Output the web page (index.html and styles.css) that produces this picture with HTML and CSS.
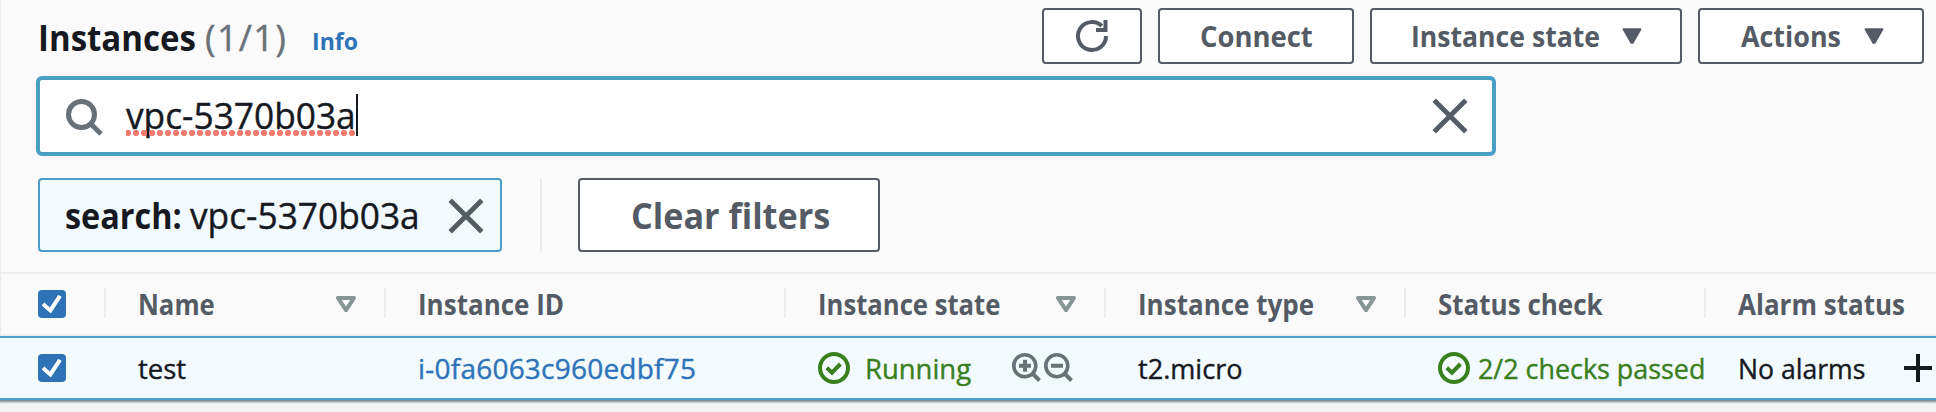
FILE: index.html
```
<!DOCTYPE html>
<html lang="en">
<head>
<meta charset="utf-8">
<title>Instances</title>
<link rel="stylesheet" href="styles.css">
</head>
<body>
<svg class="sprite" aria-hidden="true">
  <symbol id="close" viewBox="0 0 36 36"><path d="M2.2 2.2 33.8 33.8M33.8 2.2 2.2 33.8" fill="none" stroke="currentColor" stroke-width="4.800"/></symbol>
  <symbol id="ok" viewBox="0 0 32 32"><circle cx="16" cy="16" r="14" fill="none" stroke="currentColor" stroke-width="4"/><path d="M8.8 15.7 14 20.6 22.4 12" fill="none" stroke="currentColor" stroke-width="4"/></symbol>
  <symbol id="down" viewBox="0 0 20 16"><path d="M1.6 1.2H18.4L10.7 14.8H9.3Z" fill="currentColor" stroke="currentColor" stroke-width="2" stroke-linejoin="round"/></symbol>
  <symbol id="sort" viewBox="0 0 20 16"><path d="M2 2H18L10 14.2Z" fill="none" stroke="currentColor" stroke-width="4" stroke-linejoin="round"/></symbol>
  <symbol id="check" viewBox="0 0 28 28"><path d="M5 14 12.4 20.4 22 5.8" fill="none" stroke="#fff" stroke-width="4"/></symbol>
</svg>
<main class="panel">
  <header class="top">
    <h1 class="title"><span class="t92">Instances</span></h1>
    <span class="count">(1/1)</span>
    <a class="info"><span class="t96">Info</span></a>
    <div class="actions">
      <button class="btn refresh"><svg width="34" height="34" viewBox="0 0 34 34"><path d="M31 17A14 14 0 1 1 26.8 7" fill="none" stroke="currentColor" stroke-width="4"/><path d="M28.500 1h4v12H21v-4h7.500Z" fill="currentColor"/></svg></button>
      <button class="btn connect"><span class="t98">Connect</span></button>
      <button class="btn state"><span class="t95">Instance state</span><svg width="20" height="16"><use href="#down"/></svg></button>
      <button class="btn menu"><span class="t96">Actions</span><svg width="20" height="16"><use href="#down"/></svg></button>
    </div>
  </header>
  <div class="search">
    <svg class="lens" width="38" height="38" viewBox="0 0 38 38"><circle cx="15.500" cy="15.500" r="13" fill="none" stroke="currentColor" stroke-width="5"/><path d="M24.500 24.500 35 35" stroke="currentColor" stroke-width="5"/></svg>
    <span class="query"><span class="t98">vpc-5370b03a</span></span>
    <svg class="clear" width="36" height="36"><use href="#close"/></svg>
  </div>
  <div class="filters">
    <div class="chip"><b class="t90">search:</b><span class="value t98">vpc-5370b03a</span><svg width="36" height="36"><use href="#close"/></svg></div>
    <i class="rule"></i>
    <button class="btn reset"><span class="t95">Clear filters</span></button>
  </div>
  <div class="row head">
    <div class="cell pick"><span class="box"><svg width="28" height="28"><use href="#check"/></svg></span></div>
    <div class="cell"><span class="t92">Name</span><svg class="sort" width="20" height="16"><use href="#sort"/></svg></div>
    <div class="cell"><span class="t93">Instance ID</span></div>
    <div class="cell"><span class="t92">Instance state</span><svg class="sort" width="20" height="16"><use href="#sort"/></svg></div>
    <div class="cell"><span class="t93">Instance type</span><svg class="sort" width="20" height="16"><use href="#sort"/></svg></div>
    <div class="cell"><span class="t93">Status check</span></div>
    <div class="cell"><span class="t93">Alarm status</span></div>
  </div>
  <div class="row body">
    <div class="cell pick"><span class="box"><svg width="28" height="28"><use href="#check"/></svg></span></div>
    <div class="cell"><span class="t98">test</span></div>
    <div class="cell id"><a>i-0fa6063c960edbf75</a></div>
    <div class="cell running"><svg width="32" height="32"><use href="#ok"/></svg><span class="t98">Running</span>
      <svg class="zoom" width="61" height="30" viewBox="0 0 61 30"><g fill="none" stroke="currentColor"><g stroke-width="3.6"><circle cx="12.800" cy="12.800" r="11"/><circle cx="44.800" cy="12.800" r="11"/></g><path d="M20.500 20.500 27.500 27.500M52.500 20.500 59.500 27.500M7 12.800H19M13 6.800V18.800M39 12.800H51" stroke-width="4"/></g></svg>
    </div>
    <div class="cell"><span class="t97">t2.micro</span></div>
    <div class="cell checks"><svg width="32" height="32"><use href="#ok"/></svg><span class="t96">2/2 checks passed</span></div>
    <div class="cell alarm"><span class="t95">No alarms</span><svg class="plus" width="28" height="28" viewBox="0 0 28 28"><path d="M14 0V28M0 14H28" stroke="currentColor" stroke-width="4"/></svg></div>
  </div>
</main>
</body>
</html>
```
FILE: styles.css
```
* { box-sizing: border-box; }
body { margin: 0; background: #f2f3f3; color: #16191f; font: 460 28px/40px "Open Sans", "Noto Sans", sans-serif; overflow: hidden; height: 412px; }
.sprite { position: absolute; width: 0; height: 0; }
svg { display: block; flex: none; }
.panel { height: 400px; background: #fafafa; box-shadow: 0 1px 2px 1px rgba(0, 28, 36, .5), inset 1px 0 #eaeded; }
.t90, .t92, .t93, .t95, .t96, .t97, .t98 { display: inline-block; white-space: nowrap; transform-origin: left; }
.t90 { transform: scaleX(.9); }
.t92 { transform: scaleX(.917); }
.t93 { transform: scaleX(.929); }
.t95 { transform: scaleX(.95); }
.t96 { transform: scaleX(.96); }
.t97 { transform: scaleX(.968); }
.t98 { transform: scaleX(.98); }

.top { display: flex; height: 76px; padding-left: 38px; }
.title { margin: 0; width: 167px; font-size: 36px; line-height: 48px; padding-top: 14px; }
.count { width: 107px; padding-top: 14px; font-size: 36px; line-height: 48px; color: #687078; letter-spacing: 1.3px; }
.info { padding-top: 21px; font-size: 24px; font-weight: 700; color: #2e73b8; }
.actions { display: flex; gap: 16px; margin: 8px 12px 0 auto; }
.btn { display: flex; align-items: center; height: 56px; padding: 0 0 0 40px; border: 2px solid #545b64; border-radius: 4px; background: #fff; color: #545b64; font: 700 28px/40px "Open Sans", "Noto Sans", sans-serif; }
.btn svg { margin-left: auto; }
.refresh { width: 100px; padding: 0 31px; }
.connect { width: 196px; }
.state { width: 312px; padding: 0 38px 0 39px; }
.menu { width: 226px; padding: 0 38px 0 41px; }

.search { display: flex; align-items: center; width: 1460px; height: 80px; margin-left: 36px; padding: 0 24px 0 26px; border: 4px solid #4a9fc7; border-radius: 6px; background: #fff; font-size: 36px; line-height: 48px; }
.lens { color: #687078; margin-top: 3px; }
.query { display: flex; position: relative; align-items: center; height: 42px; width: 232px; margin: -2px 0 0 22px; padding-top: 2px; border-right: 2px solid #16191f; }
.query::after { content: ""; position: absolute; left: 0; bottom: 0; width: 230px; height: 6px; background: radial-gradient(circle at 3px 3px, #f37b6d 2.8px, transparent 3.4px) -1px 0 / 8px 6px; }
.clear { margin-left: auto; color: #545b64; }

.filters { display: flex; height: 94px; padding: 0 38px; margin-top: 22px; }
.chip { display: flex; align-items: center; width: 464px; height: 74px; padding: 1px 16px 0 25px; border: 2px solid #4a9fc7; border-radius: 4px; background: #f2fafe; font-size: 36px; }
.chip .value { margin-left: -5px; }
.chip svg { margin-left: auto; color: #545b64; }
.rule { width: 2px; height: 74px; margin: 0 36px 0 38px; background: #eaeded; }
.reset { width: 302px; height: 74px; padding: 2px 0 0 51px; font-size: 36px; }

.count, .query, .value, .body { -webkit-text-stroke: .4px currentColor; }

.row { display: grid; grid-template-columns: 106px 280px 400px 320px 300px 300px 230px; }
.cell { display: flex; align-items: center; padding-left: 32px; white-space: nowrap; min-width: 0; }
.head { height: 64px; padding: 14px 0 16px; border-top: 2px solid #eaeded; border-bottom: 2px solid #eaeded; color: #545b64; font-weight: 700; }
.head .cell { height: 30px; border-right: 2px solid #eaeded; }
.head .cell:last-child { border-right: 0; }
.head span { margin-top: 2px; }
.cell.pick { padding-left: 38px; }
.box { width: 28px; height: 28px; flex: none; border-radius: 4px; background: #2e73b8; }
.sort { margin: 2px 28px 0 auto; color: #879596; }
.body { height: 64px; border-top: 2px solid #4a9fc7; border-bottom: 2px solid #4a9fc7; background: #f2fafe; }
.id { color: #2e73b8; letter-spacing: .22px; }
.running, .checks { color: #3a7f1d; }
.running span { margin-left: 15px; }
.zoom { margin-left: 39px; color: #687078; }
.checks { overflow: hidden; }
.checks span { margin-left: 8px; }
.plus { margin-left: auto; margin-right: 4px; }
```
